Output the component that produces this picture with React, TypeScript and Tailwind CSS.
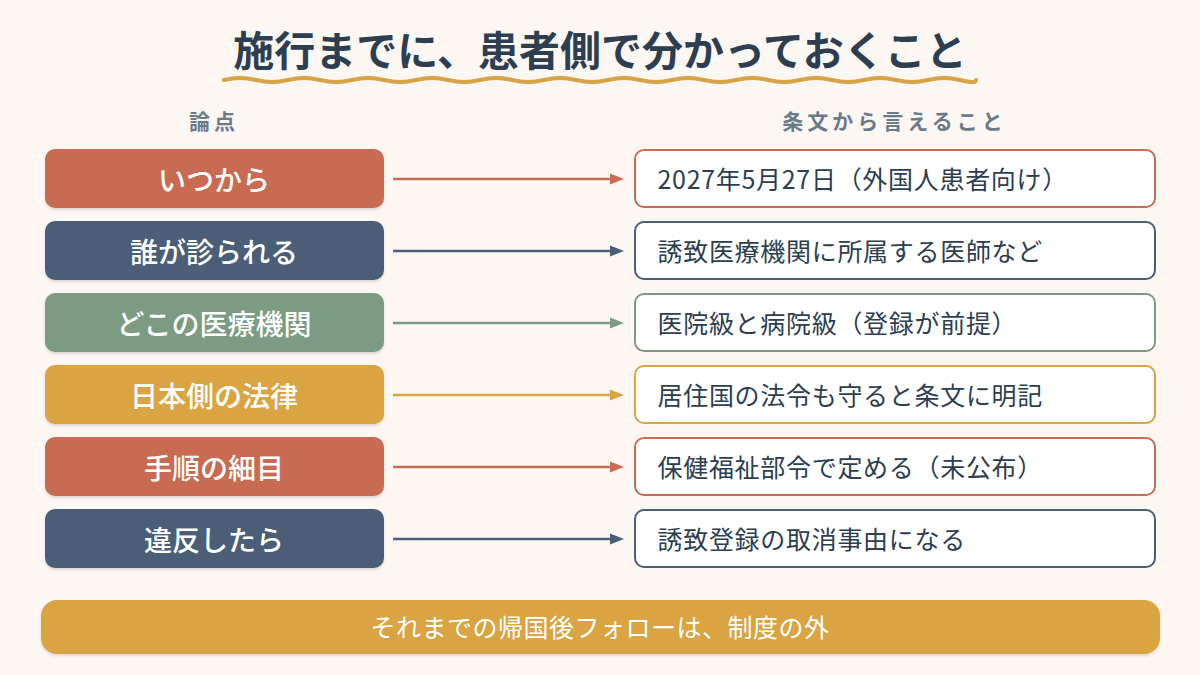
import React from "react";

const rows = [
  { topic: "いつから", text: "2027年5月27日（外国人患者向け）", color: "#c96a52" },
  { topic: "誰が診られる", text: "誘致医療機関に所属する医師など", color: "#4a5f77" },
  { topic: "どこの医療機関", text: "医院級と病院級（登録が前提）", color: "#7b9b83" },
  { topic: "日本側の法律", text: "居住国の法令も守ると条文に明記", color: "#d9a441" },
  { topic: "手順の細目", text: "保健福祉部令で定める（未公布）", color: "#c96a52" },
  { topic: "違反したら", text: "誘致登録の取消事由になる", color: "#4a5f77" },
];

function Wave() {
  const w = 756;
  const period = 64;
  let d = "M2 6";
  for (let x = 2; x < w - 2; x += period) {
    const mid = Math.min(x + period / 2, w - 2);
    const end = Math.min(x + period, w - 2);
    d += ` Q${x + period / 4} 2 ${mid} 6`;
    if (end > mid) d += ` Q${mid + period / 4} 10 ${end} 6`;
  }
  return (
    <svg width={w} height={12} viewBox={`0 0 ${w} 12`} className="block">
      <path d={d} fill="none" stroke="#d9a441" strokeWidth={4} strokeLinecap="round" />
    </svg>
  );
}

function Arrow({ color }: { color: string }) {
  return (
    <svg width={250} height={14} viewBox="0 0 250 14" className="block">
      <line x1={9} y1={7} x2={228} y2={7} stroke={color} strokeWidth={2.5} />
      <path d="M226 1.5 L240 7 L226 12.5 Z" fill={color} />
    </svg>
  );
}

export default function App() {
  return (
    <div className="w-[1200px] h-[675px] bg-[#fcf7f3] font-['Noto_Sans_CJK_JP',sans-serif] flex flex-col items-center overflow-hidden">
      <h1 className="pt-[22px] text-[41px] leading-[52px] font-bold text-[#2c3e50] text-center">
        施行までに、患者側で分かっておくこと
      </h1>
      <Wave />

      <div className="mt-[20px] w-[1111px] grid grid-cols-[339px_250px_522px]">
        <div className="text-center text-[21px] leading-[28px] font-bold tracking-[4px] text-[#6b7a89]">論点</div>
        <div />
        <div className="text-center text-[21px] leading-[28px] font-bold tracking-[4px] text-[#6b7a89]">条文から言えること</div>
      </div>

      <div className="mt-[15px] w-[1111px] flex flex-col gap-[13px]">
        {rows.map((r) => (
          <div key={r.topic} className="grid grid-cols-[339px_250px_522px] items-center">
            <div
              className="h-[59px] rounded-[10px] flex items-center justify-center text-white text-[28px] font-medium shadow-[0_2px_3px_rgba(0,0,0,0.12)]"
              style={{ backgroundColor: r.color }}
            >
              {r.topic}
            </div>
            <Arrow color={r.color} />
            <div
              className="h-[59px] rounded-[10px] border-[2.5px] bg-white flex items-center pl-[22px] text-[25px] tracking-[0.7px] text-[#2c3e50]"
              style={{ borderColor: r.color }}
            >
              {r.text}
            </div>
          </div>
        ))}
      </div>

      <div className="mt-[32px] w-[1119px] h-[54px] rounded-[16px] bg-[#d9a441] flex items-center justify-center text-white text-[25px] tracking-[0.5px] shadow-[0_2px_3px_rgba(0,0,0,0.12)]">
        それまでの帰国後フォローは、制度の外
      </div>
    </div>
  );
}
